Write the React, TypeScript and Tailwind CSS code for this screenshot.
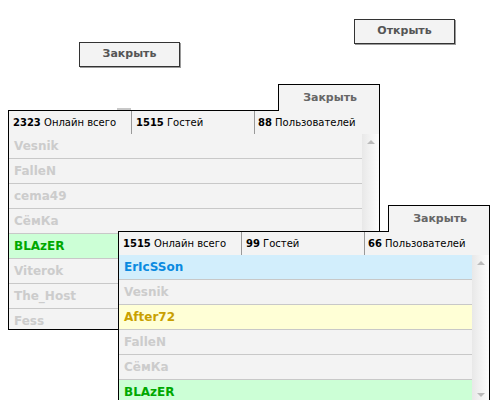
import React from 'react';

type Row = { name: string; tone?: 'green' | 'blue' | 'gold' };

const toneClasses = {
  gray: 'bg-[#f3f3f3] text-[#cccccc]',
  green: 'bg-[#ccffd6] text-[#00a800]',
  blue: 'bg-[#d2eefc] text-[#0a8ae0]',
  gold: 'bg-[#ffffd6] text-[#c9a000]',
};

const font = { fontFamily: '"DejaVu Sans", Verdana, sans-serif' };

const Button = ({ label, className }: { label: string; className: string }) => (
  <button
    className={`absolute flex h-[25px] w-[101px] items-center justify-center border border-[#333] bg-[#f3f3f3] text-[11px] font-bold text-[#555] shadow-[1px_1px_0_#9a9a9a] ${className}`}
    style={font}
  >
    {label}
  </button>
);

const OnlinePanel = ({
  total,
  guests,
  users,
  rows,
  listHeight,
  className,
}: {
  total: string;
  guests: string;
  users: string;
  rows: Row[];
  listHeight: string;
  className: string;
}) => (
  <div className={`absolute w-[372px] ${className}`} style={font}>
    <div className="flex justify-end">
      <div className="relative z-10 -mb-px flex h-[27px] w-[102px] items-center justify-end border border-b-0 border-black bg-[#f3f3f3] pr-[22px] text-[11px] font-bold text-[#666]">
        Закрыть
      </div>
    </div>
    <div className="border border-black bg-[#f3f3f3]">
      <div className="grid h-[23px] grid-cols-[123px_123px_1fr] text-[10px] text-black">
        <div className="flex items-center border-r border-[#999] pl-[4px]">
          <b>{total}</b>&nbsp;Онлайн всего
        </div>
        <div className="flex items-center border-r border-[#999] pl-[4px]">
          <b>{guests}</b>&nbsp;Гостей
        </div>
        <div className="flex items-center pl-[3px]">
          <b>{users}</b>&nbsp;Пользователей
        </div>
      </div>
      <div className={`flex overflow-hidden ${listHeight}`}>
        <div className="flex-1">
          {rows.map((row) => (
            <div
              key={row.name}
              className={`flex h-[25px] items-center border-b border-[#c8c8c8] pl-[5px] text-[12px] font-bold ${
                toneClasses[row.tone ?? 'gray']
              }`}
            >
              {row.name}
            </div>
          ))}
        </div>
        <div className="relative w-[17px] bg-gradient-to-r from-[#e8e8e8] to-[#fdfdfd]">
          <div className="absolute left-[5px] top-[6px] h-0 w-0 border-x-[4px] border-b-[4px] border-x-transparent border-b-[#bbb]" />
          <div className="absolute bottom-[3px] left-[5px] h-0 w-0 border-x-[4px] border-t-[4px] border-x-transparent border-t-[#bbb]" />
        </div>
      </div>
    </div>
  </div>
);

const App = () => {
  const first: Row[] = [
    { name: 'Vesnik' },
    { name: 'FalleN' },
    { name: 'cema49' },
    { name: 'СёмКа' },
    { name: 'BLAzER', tone: 'green' },
    { name: 'Viterok' },
    { name: 'The_Host' },
    { name: 'Fess' },
  ];
  const second: Row[] = [
    { name: 'ErIcSSon', tone: 'blue' },
    { name: 'Vesnik' },
    { name: 'After72', tone: 'gold' },
    { name: 'FalleN' },
    { name: 'СёмКа' },
    { name: 'BLAzER', tone: 'green' },
  ];

  return (
    <div className="relative h-[400px] w-[500px] overflow-hidden bg-white">
      <Button label="Открыть" className="left-[354px] top-[19px]" />
      <Button label="Закрыть" className="left-[79px] top-[42px]" />

      <div className="absolute left-[117px] top-[108px] h-[2px] w-[14px] bg-[#c8c8c8]" />
      <OnlinePanel
        total="2323"
        guests="1515"
        users="88"
        rows={first}
        listHeight="h-[195px]"
        className="left-[8px] top-[84px]"
      />
      <OnlinePanel
        total="1515"
        guests="99"
        users="66"
        rows={second}
        listHeight="h-[145px]"
        className="left-[118px] top-[205px]"
      />
    </div>
  );
};

export default App;
